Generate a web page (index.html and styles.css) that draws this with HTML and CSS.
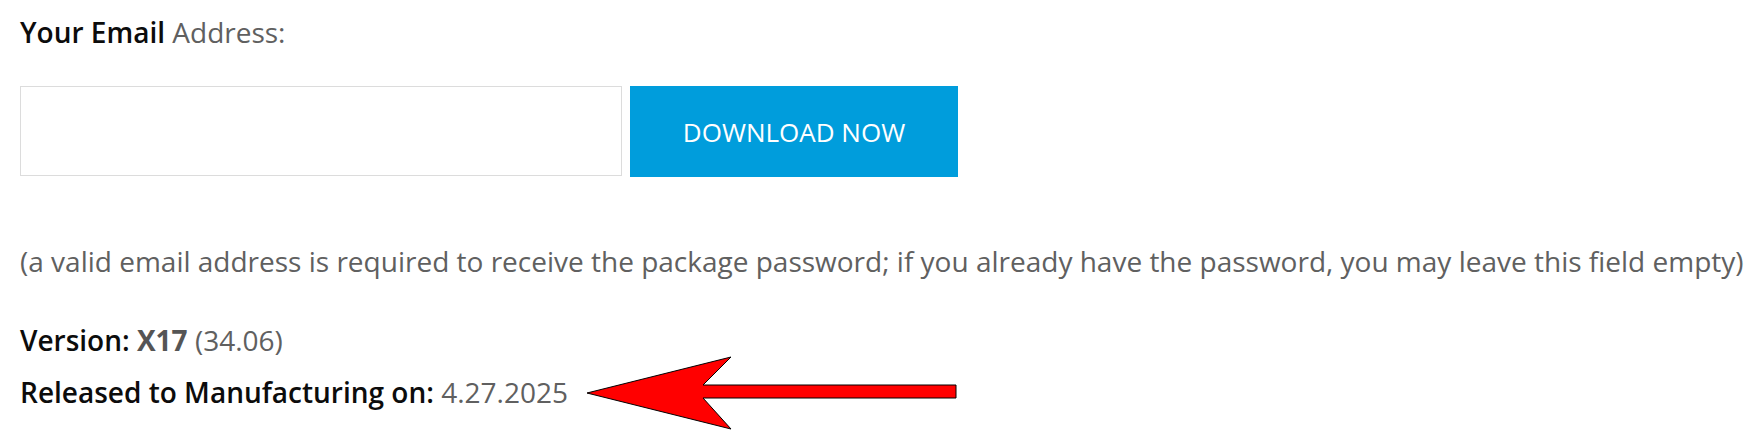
FILE: index.html
```html
<!DOCTYPE html>
<html>
<head>
<meta charset="utf-8">
<link rel="stylesheet" href="styles.css">
</head>
<body>
<div class="page">
  <p class="label"><strong>Your Email</strong> Address:</p>
  <div class="row">
    <input class="email" type="text">
    <button class="btn">DOWNLOAD NOW</button>
  </div>
  <p class="note">(a valid email address is required to receive the package password; if you already have the password, you may leave this field empty)</p>
  <p class="version"><strong>Version:</strong> <b class="x">X17</b> (34.06)</p>
  <p class="released"><strong>Released to Manufacturing on:</strong> 4.27.2025</p>
  <svg class="arrow" width="385" height="84" viewBox="0 0 385 84">
    <polygon points="7,43 151,7 123,35 376,35 376,48 123,48 151,79" fill="#ff0000" stroke="#000" stroke-width="1"/>
  </svg>
</div>
</body>
</html>
```

FILE: styles.css
```css
html, body {
  margin: 0;
  padding: 0;
  background: #fff;
}
.page {
  position: relative;
  width: 1764px;
  height: 434px;
  padding: 12px 20px 0 20px;
  box-sizing: border-box;
  font-family: "Open Sans", "Liberation Sans", sans-serif;
  font-size: 28px;
  line-height: 40px;
  color: #606060;
  white-space: nowrap;
}
p {
  margin: 0;
}
strong {
  font-weight: 600;
  color: #0c0c0c;
}
.x {
  font-weight: 700;
  color: #555;
}
.row {
  display: flex;
  align-items: flex-start;
  gap: 8px;
  margin-top: 34px;
}
.email {
  width: 602px;
  height: 90px;
  box-sizing: border-box;
  border: 1px solid #dcdcdc;
  background: #fff;
  margin: 0;
  padding: 0;
}
.btn {
  width: 328px;
  height: 91px;
  border: none;
  margin: 0;
  padding: 0;
  background: #009ddc;
  color: #fff;
  font-family: "Open Sans", "Liberation Sans", sans-serif;
  font-size: 26px;
  font-weight: 400;
}
.note {
  margin-top: 64px;
}
.version {
  margin-top: 39px;
}
.released {
  margin-top: 12px;
}
.arrow {
  position: absolute;
  left: 580px;
  top: 350px;
}
```
